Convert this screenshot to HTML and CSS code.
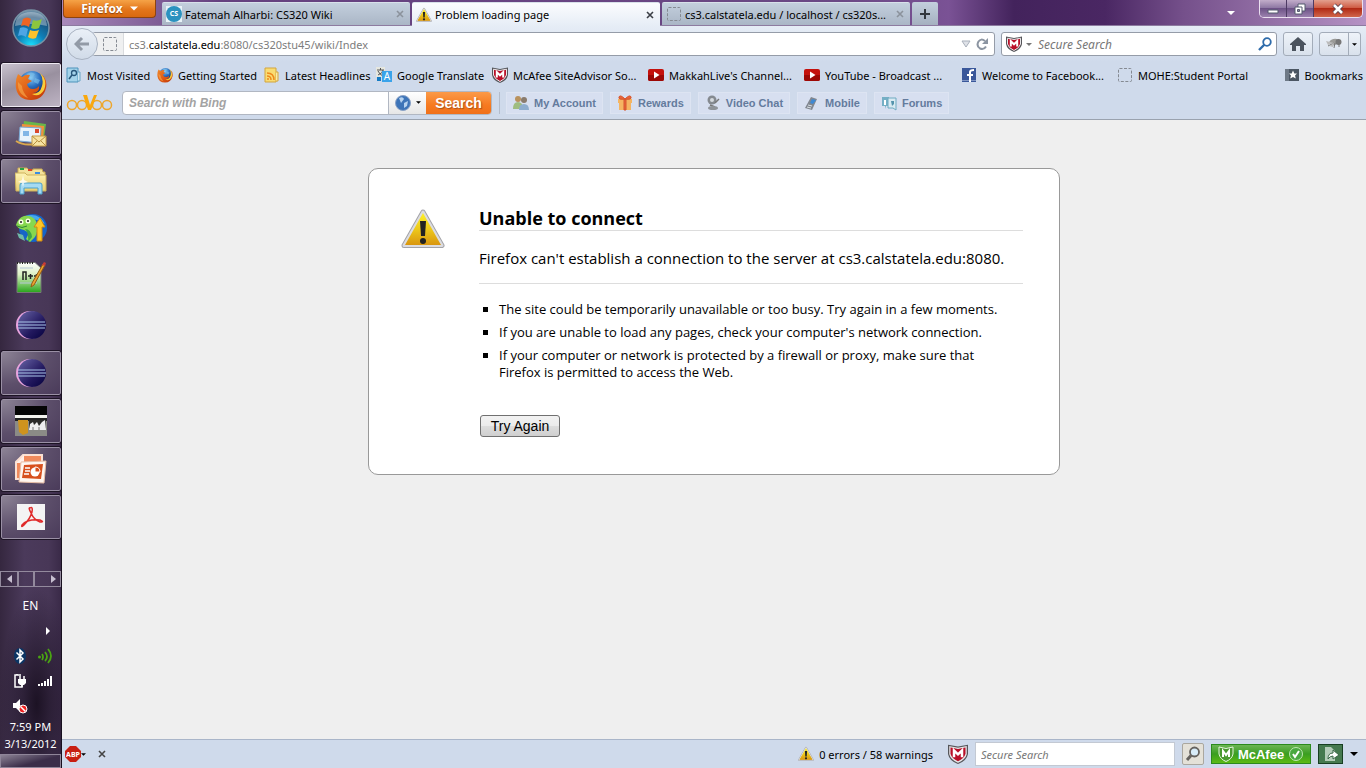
FILE: index.html
```html
<!DOCTYPE html>
<html lang="en">
<head>
    <meta charset="UTF-8">
    <meta name="viewport" content="width=device-width, initial-scale=1.0">
    <title>Problem loading page</title>
    <link rel="stylesheet" href="styles.css">
</head>
<body>
    <!-- shared icons -->
    <svg class="defs" width="0" height="0" aria-hidden="true">
        <defs>
            <linearGradient id="gYellow" x1="0" y1="0" x2="0" y2="1"><stop offset="0" stop-color="#fdf02a"/><stop offset=".5" stop-color="#edc91b"/><stop offset="1" stop-color="#d9960f"/></linearGradient>
            <radialGradient id="gGlobe" cx=".45" cy=".25" r=".7"><stop offset="0" stop-color="#8fd0f5"/><stop offset=".5" stop-color="#2a6fc0"/><stop offset="1" stop-color="#0c2560"/></radialGradient>
            <linearGradient id="gFox" x1="0" y1="0" x2="1" y2="1"><stop offset="0" stop-color="#f08a2c"/><stop offset=".6" stop-color="#dc5412"/><stop offset="1" stop-color="#b8330a"/></linearGradient>
            <radialGradient id="gOrb" cx=".5" cy="1" r="1"><stop offset="0" stop-color="#19e4ff"/><stop offset=".4" stop-color="#0f7fb8"/><stop offset=".8" stop-color="#1c4c74"/><stop offset="1" stop-color="#7c9db4"/></radialGradient>
            <linearGradient id="gEclipse" x1="0" y1="0" x2="1" y2="1"><stop offset="0" stop-color="#6a66a8"/><stop offset=".6" stop-color="#23195f"/><stop offset="1" stop-color="#04003c"/></linearGradient>
            <linearGradient id="gFolder" x1="0" y1="0" x2="0" y2="1"><stop offset="0" stop-color="#fdf3b4"/><stop offset="1" stop-color="#e9cf72"/></linearGradient>
            <linearGradient id="gGreen" x1="0" y1="0" x2="0" y2="1"><stop offset="0" stop-color="#ffffff"/><stop offset=".4" stop-color="#dcf0c4"/><stop offset="1" stop-color="#27a51a"/></linearGradient>
        </defs>
        <symbol id="warning" viewBox="0 0 44 40">
            <path d="M22 3 41 36.500H3Z" fill="url(#gYellow)" stroke="#a3a3a8" stroke-width="5" stroke-linejoin="round"/>
            <path d="M22 3 41 36.500H3Z" fill="url(#gYellow)" stroke="#dcdce0" stroke-width="3" stroke-linejoin="round"/>
            <path d="M22 4 40 36H4Z" fill="url(#gYellow)"/>
            <path d="M19 12h6l-1 15h-4z" fill="#222"/><circle cx="22" cy="32" r="3" fill="#222"/>
        </symbol>
        <symbol id="firefox" viewBox="0 0 32 32">
            <circle cx="17" cy="15" r="13" fill="url(#gGlobe)"/>
            <path d="M12 5q4-3 8 0l-2 3-5 1zM20 9l5 2-2 4-4-2z" fill="#7cc0ea" opacity=".6"/>
            <path d="M3 5 7 8Q11 5 15 6L13 10 17 12 12 15Q13 20 18 20 22 20 24 17 25 23 18 24 27 25 29 15 30 8 25 4 33 10 31 19 28 31 16 31 3 31 1 19 0 11 3 5Z" fill="url(#gFox)"/>
            <path d="M25 4Q29 10 27 17 25 25 17 25 24 29 29 21 33 11 25 4Z" fill="#f8cc3a"/>
            <path d="M3 13Q2 25 13 29 7 22 7 17Z" fill="#f5a347" opacity=".7"/>
        </symbol>
        <symbol id="shield" viewBox="0 0 16 16">
            <path d="M0 .500 8 2 16 .500V8Q15 13.500 8 16 1 13.500 0 8Z" fill="#55565a"/>
            <path d="M1.500 2.200 8 3.500 14.500 2.200V8Q13.500 12 8 14.500 2.500 12 1.500 8Z" fill="#b90f28" stroke="#e8e8ea" stroke-width="1"/>
            <path d="M4.800 10.500V5.200L8 8.300 11.200 5.200V10.500" fill="none" stroke="#fff" stroke-width="2"/>
        </symbol>
        <symbol id="blank" viewBox="0 0 16 16"><rect x="1.500" y="1.500" width="13" height="13" rx="1" fill="none" stroke="#858a92" stroke-dasharray="3 1.500"/></symbol>
        <symbol id="youtube" viewBox="0 0 16 16"><rect y="2" width="16" height="12" rx="2" fill="#c4110c"/><path d="M0 8h16v4q0 2-2 2H2q-2 0-2-2z" fill="#9c0805"/><path d="M6 4.500 11.500 8 6 11.500z" fill="#fff"/></symbol>
        <symbol id="close" viewBox="0 0 8 8"><path d="M1 1 7 7M7 1 1 7" fill="none" stroke="currentColor" stroke-width="1.600"/></symbol>
        <symbol id="down" viewBox="0 0 8 4"><path d="M0 0h8L4 4z" fill="currentColor"/></symbol>
        <symbol id="eclipse" viewBox="0 0 32 32">
            <circle cx="15" cy="16" r="14" fill="#e9a4df"/><circle cx="17" cy="16" r="14" fill="url(#gEclipse)"/>
            <path d="M3 13h27M3 16h28M3 19h27" stroke="#a9c5ea" stroke-width="1.200"/>
        </symbol>
    </svg>

    <aside class="taskbar">
        <button class="start" aria-label="Start">
            <svg viewBox="0 0 40 40" width="40" height="40">
                <circle cx="20" cy="20" r="18" fill="url(#gOrb)" stroke="#7793a6" stroke-width="1.500"/>
                <path d="M4 18Q5 4 20 4T36 18Q20 14 4 18Z" fill="#fff" opacity=".35"/>
                <path d="M12 11q4-3 8 0l-2 8q-4-3-8-1z" fill="#ee6423"/><path d="M22 12q4 2 9-1l-3 9q-4 2-8 0z" fill="#8cc63e"/>
                <path d="M9 20q4-2 8 1l-2 8q-4-3-8-1z" fill="#4ea5e4"/><path d="M19 22q4 2 9 0l-3 8q-4 2-8-1z" fill="#fdc22d"/>
            </svg>
        </button>
        <nav class="tasks">
            <button class="task framed current" aria-label="Firefox"><svg width="32" height="32"><use href="#firefox"/></svg></button>
            <button class="task framed" aria-label="Mail">
                <svg viewBox="0 0 32 32" width="32" height="32"><path d="M9 4 31 7 29 21 7 18z" fill="#69b64b"/><path d="M7 7 29 9 28 23 6 21z" fill="#f0913a"/><path d="M5 10 26 11 25 26 4 24z" fill="#e9f3fb" stroke="#7aa9d4"/><path d="M8 14h6v5H8z" fill="#82b6e6"/><path d="M20 12h4v4h-4z" fill="#d9482c"/><path d="M1 24q8 5 18 3" stroke="#dba94e" stroke-width="2" fill="none"/><path d="M17 19h14v10H17z" fill="#f6e3a2" stroke="#c69b45"/><path d="M17 19l7 6 7-6M17 29l5-5M31 29l-5-5" fill="none" stroke="#b78f3e"/></svg>
            </button>
            <button class="task framed" aria-label="Explorer">
                <svg viewBox="0 0 32 32" width="32" height="32"><path d="M3 5V3h9l2 2h4V4h9l1 3h2v18H3z" fill="#f3e29a" stroke="#c9ab51"/><path d="M0 8h10l2 2h19v16H1z" fill="url(#gFolder)" stroke="#cdb25c"/><path d="M5 3h4v2H5z" fill="#27a343"/><path d="M13 4h4v2h-4z" fill="#d94426"/><path d="M20 7h5v2h-5z" fill="#3a8ee0"/><path d="M5 29V20q0-2 2-2h18q2 0 2 2v9h-4v-6H9v6z" fill="#a5daf2" stroke="#4ba1cc"/><path d="M8 10l1 5 4 2-4 1-1 4-1-4-4-1 4-2z" fill="#fff" opacity=".8"/></svg>
            </button>
            <button class="task" aria-label="Updater">
                <svg viewBox="0 0 32 32" width="32" height="32"><circle cx="18" cy="15" r="14" fill="#1664c8"/><path d="M10 3q14-4 20 8-10-7-20-3z" fill="#46a8ee"/><path d="M1 12q2-7 8-9 8-1 12 5 3 10-1 16l-5 5-4-3 3-6-5-3q-6-1-8-5z" fill="#86d84f"/><path d="M10 16q6 0 7 8l-4 5q1-9-3-13z" fill="#3fa447"/><path d="M2 20l6 2 2 6-6-3z" fill="#6fb9a8"/><circle cx="6" cy="9" r="2.500" fill="#f5ffe2"/><circle cx="6" cy="9" r="1" fill="#222"/><circle cx="13" cy="8" r="2.500" fill="#f5ffe2"/><circle cx="13" cy="8" r="1" fill="#222"/><path d="M2 13q5 3 10 0" fill="none" stroke="#2f8a35"/><path d="M25 5 30 14H27V28H22V14H19z" fill="#fdc724" stroke="#cf8813"/></svg>
            </button>
            <button class="task" aria-label="Notepad++">
                <svg viewBox="0 0 32 32" width="32" height="32"><path d="M2 1.500H20L26 7V31.500H2z" fill="url(#gGreen)" stroke="#777"/><path d="M2 2h17" stroke="#222" stroke-width="2" stroke-dasharray="1 1.500"/><path d="M5 7h13M5 22h17" stroke="#b5c7d7"/><path d="M8 19V11h3v8M13 15h5M15.500 13v5M19 15h5M21.500 13v5" fill="none" stroke="#222" stroke-width="1.500"/><path d="M28 3l2 1-11 20-3 2 1-4z" fill="#eba331" stroke="#925b14"/><path d="M27 4l2-3 2 1-1 3z" fill="#c93c36"/></svg>
            </button>
            <button class="task" aria-label="Eclipse"><svg width="32" height="32"><use href="#eclipse"/></svg></button>
            <button class="task framed" aria-label="Eclipse workspace"><svg width="32" height="32"><use href="#eclipse"/></svg></button>
            <button class="task framed" aria-label="Console">
                <svg viewBox="0 0 32 32" width="32" height="32"><path d="M0 1h32v30H0z" fill="#8b8b86"/><path d="M0 1h32v9H0z" fill="#050505"/><path d="M0 10h32v3H0z" fill="#f3f3ee"/><path d="M0 13h32v3H0z" fill="#222"/><path d="M3 15h10v13l-5 2-4-3z" fill="#cf931e"/><path d="M14 15h17v8H14z" fill="#2a2a28"/><path d="M14 25l1-6 3-2 1 3 3-3 2 4 3-4 3-2 1 10z" fill="#eee"/><path d="M18 25v-3M24 25v-3" stroke="#777"/></svg>
            </button>
            <button class="task framed" aria-label="PowerPoint">
                <svg viewBox="0 0 32 32" width="32" height="32"><path d="M8 2H27V26H1V9z" fill="#f08a5c" stroke="#fbe1d3" stroke-width="2"/><path d="M1 10 9 2v8z" fill="#fff0e8"/><path d="M6 9 31 8 29 30 4 29z" fill="#fff6ef" stroke="#e7bca4"/><path d="M9 12 28 11 26 26 7 25z" fill="#d7501d"/><path d="M10 15h5M10 18h5M9 21h5" stroke="#fff" stroke-width="1.500"/><circle cx="20" cy="19" r="4.500" fill="#fff"/><path d="M20 19v-5q5 0 5 5z" fill="#d7501d" stroke="#fff"/></svg>
            </button>
            <button class="task framed" aria-label="Adobe Reader">
                <svg viewBox="0 0 32 32" width="32" height="32"><path d="M2 3h28v26H2z" fill="#f4f4f4"/><path d="M15 7q3-2 2 4-2 7-8 13-3 3-2 0 5-6 18-5 5 2 0 2-6-2-9-9-3-6-1-5z" fill="none" stroke="#e02b2b" stroke-width="1.500"/></svg>
            </button>
        </nav>
        <div class="task-scroll">
            <button aria-label="Scroll left"><svg viewBox="0 0 5 8" width="5" height="8"><path d="M5 0v8L0 4z" fill="#c7bfd0"/></svg></button>
            <button class="thumb" aria-label="Thumb"></button>
            <button class="last" aria-label="Scroll right"><svg viewBox="0 0 5 8" width="5" height="8"><path d="M0 0v8l5-4z" fill="#c7bfd0"/></svg></button>
        </div>
        <div class="tray">
            <span class="lang">EN</span>
            <div class="tray-icons">
                <span></span>
                <svg viewBox="0 0 16 16" width="16" height="16"><path d="M9 4v8l4-4z" fill="#fff"/></svg>
                <svg viewBox="0 0 16 16" width="16" height="16"><ellipse cx="8" cy="8" rx="6" ry="8" fill="#0c3564"/><path d="M4.500 4.500 11 11 8 14V2l3 3-6.500 6.500" fill="none" stroke="#fff" stroke-width="1.500"/></svg>
                <svg viewBox="0 0 16 16" width="16" height="16"><circle cx="2.500" cy="9" r="1.500" fill="#4aa413"/><path d="M5 6q2 3 0 6M8 4q4 5 0 9M11 1q6 7 0 14" fill="none" stroke="#4aa413" stroke-width="1.800"/></svg>
                <svg viewBox="0 0 16 16" width="16" height="16"><path d="M9 2H3v12h7v-3M5 2V1" fill="none" stroke="#fff" stroke-width="1.500"/><path d="M6 6h8v4l-2 2H8L6 10z" fill="#fff"/><path d="M8 7V3M12 7V3M10 11v3" fill="none" stroke="#fff" stroke-width="1.500"/></svg>
                <svg viewBox="0 0 16 16" width="16" height="16"><path d="M1 11h2v2H1zM4 10h2v3H4zM7 8h2v5H7zM10 6h2v7h-2zM13 3h2v10h-2z" fill="#fff"/></svg>
                <svg viewBox="0 0 16 16" width="16" height="16"><path d="M1 5h3l4-4v13l-4-4H1z" fill="#fff"/><circle cx="11" cy="11" r="4" fill="#e22" stroke="#fff"/><path d="M8.500 8.500l5 5" stroke="#fff" stroke-width="1.500"/></svg>
            </div>
            <div class="clock"><span>7:59 PM</span><span>3/13/2012</span></div>
        </div>
        <button class="show-desktop" aria-label="Show desktop"></button>
    </aside>

    <div class="browser">
        <header class="titlebar">
            <button class="app-menu">Firefox <svg width="8" height="5"><use href="#down"/></svg></button>
            <div class="tabs">
                <div class="tab">
                    <svg viewBox="0 0 16 16" width="16" height="16"><path d="M0 0h16v16H0z" fill="#e9f3f8"/><circle cx="8" cy="8" r="8" fill="#2b92bf"/><text x="8" y="10" font-size="7" font-weight="bold" text-anchor="middle" fill="#fff">CS</text></svg>
                    <a href="#">Fatemah Alharbi: CS320 Wiki</a>
                    <button class="tab-close" aria-label="Close tab"><svg width="8" height="8"><use href="#close"/></svg></button>
                </div>
                <div class="tab active">
                    <svg width="16" height="16"><use href="#warning"/></svg>
                    <a href="#">Problem loading page</a>
                    <button class="tab-close" aria-label="Close tab"><svg width="8" height="8"><use href="#close"/></svg></button>
                </div>
                <div class="tab">
                    <svg width="16" height="16"><use href="#blank"/></svg>
                    <a href="#">cs3.calstatela.edu / localhost / cs320s...</a>
                    <button class="tab-close" aria-label="Close tab"><svg width="8" height="8"><use href="#close"/></svg></button>
                </div>
                <button class="new-tab" aria-label="New tab"><svg viewBox="0 0 10 10" width="10" height="10"><path d="M5 0v10M0 5h10" stroke="#33383f" stroke-width="2"/></svg></button>
            </div>
            <button class="all-tabs" aria-label="List all tabs"><svg width="8" height="4"><use href="#down"/></svg></button>
            <div class="window-buttons">
                <button aria-label="Minimize"><svg viewBox="0 0 12 12" width="12" height="12"><path d="M1 7h10v3H1z" fill="#fff" stroke="#555a6e"/></svg></button>
                <button aria-label="Restore"><svg viewBox="0 0 12 12" width="12" height="12"><path d="M4 1h7v7H4z" fill="#fff" stroke="#555a6e"/><path d="M1 4h7v7H1z" fill="#fff" stroke="#555a6e"/><path d="M3.500 6.500h2v2h-2z" fill="#8b86a8" stroke="#555a6e"/></svg></button>
                <button class="window-close" aria-label="Close"><svg viewBox="0 0 12 12" width="12" height="12"><path d="M2 2l8 8M10 2 2 10" stroke="#5b4550" stroke-width="4.500"/><path d="M2 2l8 8M10 2 2 10" stroke="#fff" stroke-width="2.600"/></svg></button>
            </div>
        </header>

        <div class="nav-bar">
            <button class="back" aria-label="Back"><svg viewBox="0 0 16 16" width="16" height="16"><path d="M15 8H3M8 2 2 8l6 6" fill="none" stroke="#929aa6" stroke-width="3"/></svg></button>
            <div class="url-bar">
                <span class="identity"><svg width="16" height="16"><use href="#blank"/></svg></span>
                <a class="url" href="#">cs3.<b>calstatela.edu</b>:8080/cs320stu45/wiki/Index</a>
                <button aria-label="History"><svg viewBox="0 0 10 8" width="10" height="8"><path d="M1 1h8L5 7z" fill="#dfe2e8" stroke="#a9b0bb"/></svg></button>
                <button aria-label="Reload"><svg viewBox="0 0 12 12" width="12" height="12"><path d="M9 3Q5 0 2.500 3.500 0 8 4 10.500 8 12 10 8.500" fill="none" stroke="#8c95a2" stroke-width="2"/><path d="M12 0v6H6z" fill="#8c95a2"/></svg></button>
            </div>
            <div class="search-bar">
                <svg width="16" height="16"><use href="#shield"/></svg>
                <svg class="gray" width="6" height="3"><use href="#down"/></svg>
                <input type="text" placeholder="Secure Search" aria-label="Secure Search">
                <svg viewBox="0 0 14 14" width="14" height="14"><circle cx="9" cy="5" r="3.800" fill="none" stroke="#2f6cab" stroke-width="1.800"/><path d="M6.500 7.500 1 13" stroke="#2f6cab" stroke-width="2.400"/></svg>
            </div>
            <button class="tool home" aria-label="Home"><svg viewBox="0 0 16 16" width="16" height="16"><path d="M8 1 16 8v1h-2v6h-4v-5H6v5H2V9H0V8z" fill="#4b535e"/></svg></button>
            <div class="tool addon">
                <button aria-label="Add-on"><svg viewBox="0 0 16 14" width="16" height="14"><ellipse cx="8" cy="5" rx="5" ry="3" fill="#9b9b98" transform="rotate(-15 8 5)"/><circle cx="12.500" cy="5" r="3" fill="#777"/><path d="M2 9l6-3M8 11l1-5M13 10V7" stroke="#777"/><path d="M0 4l8 2-6 2zM3 9l5-3-1 4z" fill="#bbb"/></svg></button>
                <button aria-label="Add-on menu"><svg width="5" height="3"><use href="#down"/></svg></button>
            </div>
        </div>

        <div class="bookmarks">
            <nav class="bookmark-list">
                <a href="#"><svg viewBox="0 0 16 16" width="16" height="16"><path d="M1 1h11v14H1z" fill="#a4d3ea" stroke="#4d93bb"/><path d="M12 5h2v9h-2" fill="#cbe5f2" stroke="#6ba6c6"/><circle cx="8" cy="6" r="2.500" fill="none" stroke="#28577b" stroke-width="1.300"/><path d="M6 8l-3 4" stroke="#28577b" stroke-width="1.500"/></svg>Most Visited</a>
                <a href="#"><svg width="16" height="16"><use href="#firefox"/></svg>Getting Started</a>
                <a href="#"><svg viewBox="0 0 16 16" width="16" height="16"><path d="M1 1h11v14H1z" fill="#f9dc73" stroke="#d3a53c"/><path d="M12 5h2v9h-2" fill="#fbe9a8" stroke="#d3a53c"/><path d="M3 9q4 0 4 4M3 6q7 0 7 7" fill="none" stroke="#ee8a1d" stroke-width="1.500"/><circle cx="4" cy="12" r="1" fill="#ee8a1d"/></svg>Latest Headlines</a>
                <a href="#"><svg viewBox="0 0 16 16" width="16" height="16"><path d="M0 0h9v10H0z" fill="#e6e7df"/><path d="M1 3h7M4.500 1v2M2 8q5-2 5-5M2 4q2 4 5 5" stroke="#555" fill="none"/><path d="M6 4h10v11H6z" fill="#3aa3ea"/><path d="M1 10h4v4H1z" fill="#167cc4"/><text x="11" y="13" font-size="10" text-anchor="middle" fill="#fff">A</text></svg>Google Translate</a>
                <a href="#"><svg width="16" height="16"><use href="#shield"/></svg>McAfee SiteAdvisor So...</a>
                <a href="#"><svg width="16" height="16"><use href="#youtube"/></svg>MakkahLive's Channel...</a>
                <a href="#"><svg width="16" height="16"><use href="#youtube"/></svg>YouTube - Broadcast ...</a>
                <a href="#"><svg viewBox="0 0 16 16" width="16" height="16"><path d="M1 1h14v14H1z" fill="#39579a"/><path d="M1 13h14v1H1z" fill="#8296c3"/><path d="M9 15V5q0-2 4-2M6 8h6" fill="none" stroke="#fff" stroke-width="2"/></svg>Welcome to Facebook...</a>
                <a href="#"><svg width="16" height="16"><use href="#blank"/></svg>MOHE:Student Portal</a>
            </nav>
            <button class="bookmark-menu"><svg viewBox="0 0 16 16" width="16" height="16"><path d="M1 2h14v12H1z" fill="#4b5663"/><path d="M1 2h4v12H1z" fill="#6e7986"/><path d="M9 3.500l1.300 3H13l-2 2 .8 3L9 10l-2.800 1.500.8-3-2-2h2.700z" fill="#fff"/></svg>Bookmarks</button>
        </div>

        <div class="oovoo-bar">
            <svg class="oovoo" viewBox="0 0 48 18" width="48" height="18"><g fill="none" stroke="#eda62c" stroke-width="1.500"><circle cx="6" cy="11" r="4.500"/><circle cx="16" cy="11" r="4.500"/><circle cx="31" cy="11" r="4.500"/><circle cx="41" cy="11" r="4.500"/></g><path d="M17 1h4l3 10 4-10h3L25 16h-3z" fill="#f9a80e"/></svg>
            <form class="bing">
                <input type="text" placeholder="Search with Bing" aria-label="Search with Bing">
                <button type="button" class="engine" aria-label="Search engine"><svg viewBox="0 0 16 16" width="16" height="16"><circle cx="8" cy="8" r="7.500" fill="#3d74b8" stroke="#8aa2c6"/><path d="M4 3q4-2 5 1L6 8zM9 8l4-2-1 5-3 2z" fill="#b6d2ef"/></svg><svg width="5" height="3"><use href="#down"/></svg></button>
                <button type="button" class="bing-go">Search</button>
            </form>
            <nav class="oovoo-links">
                <a href="#"><svg viewBox="0 0 16 16" width="16" height="16"><circle cx="5" cy="4" r="3" fill="#b9925d"/><path d="M0 14q0-7 5-7t5 7z" fill="#9fbd80"/><circle cx="11" cy="5" r="3" fill="#8a7b6c"/><path d="M6 15q0-6 5-6t5 6z" fill="#8eadce"/></svg>My Account</a>
                <a href="#"><svg viewBox="0 0 16 16" width="16" height="16"><path d="M1 4h14v4H1zM2 8h12v7H2z" fill="#f5b562"/><path d="M7 4h2v11H7zM8 4Q3-1 2 2T8 4Q13-1 14 2T8 4" fill="#e8643a" stroke="#d6562e"/></svg>Rewards</a>
                <a href="#"><svg viewBox="0 0 16 16" width="16" height="16"><circle cx="7" cy="5" r="4.500" fill="#858a90"/><circle cx="7" cy="5" r="2" fill="#d4d9dd"/><path d="M10 8l4-4M5 10l5 2" stroke="#777" stroke-width="1.500"/><ellipse cx="8" cy="13" rx="5" ry="2" fill="#8e9399"/></svg>Video Chat</a>
                <a href="#"><svg viewBox="0 0 16 16" width="16" height="16"><path d="M7 2 13 4 8 15 1 13z" fill="#818790"/><path d="M8 4 12 5 9 9 6 8z" fill="#3e89d4"/><path d="M13 4l2-3M4 10l4 1M3 12l4 1" stroke="#dbe2e8"/></svg>Mobile</a>
                <a href="#"><svg viewBox="0 0 16 16" width="16" height="16"><path d="M1 2h7v9H5l-1 3v-3H1z" fill="#75afc5"/><path d="M7 3h8v12l-3-2H7z" fill="#d9eaf2" stroke="#6eaac1"/><path d="M4 5v5" stroke="#fff" stroke-width="2"/><path d="M10 6h3v3l-2 2z" fill="#5594ad"/></svg>Forums</a>
            </nav>
        </div>

        <main class="page">
            <section class="error-box">
                <svg class="error-icon" width="44" height="40"><use href="#warning"/></svg>
                <div class="error-body">
                    <h1>Unable to connect</h1>
                    <p>Firefox can't establish a connection to the server at cs3.calstatela.edu:8080.</p>
                    <ul>
                        <li>The site could be temporarily unavailable or too busy. Try again in a few moments.</li>
                        <li>If you are unable to load any pages, check your computer's network connection.</li>
                        <li>If your computer or network is protected by a firewall or proxy, make sure that Firefox is permitted to access the Web.</li>
                    </ul>
                    <button class="try-again">Try Again</button>
                </div>
            </section>
        </main>

        <footer class="status-bar">
            <button class="abp" aria-label="Adblock Plus"><svg viewBox="0 0 16 16" width="16" height="16"><path d="M5 0h6l5 5v6l-5 5H5l-5-5V5z" fill="#c81e12"/><text x="8" y="10.500" font-size="7" font-weight="bold" text-anchor="middle" fill="#fff">ABP</text></svg><svg width="5" height="3"><use href="#down"/></svg></button>
            <button class="bar-close" aria-label="Close bar"><svg width="8" height="8"><use href="#close"/></svg></button>
            <div class="status-right">
                <button class="errors"><svg width="16" height="16"><use href="#warning"/></svg>0 errors / 58 warnings</button>
                <svg width="20" height="20"><use href="#shield"/></svg>
                <input type="text" placeholder="Secure Search" aria-label="Secure Search">
                <button class="lens" aria-label="Search"><svg viewBox="0 0 16 16" width="16" height="16"><circle cx="9.500" cy="6" r="4.500" fill="#d8ecf8" stroke="#65625e" stroke-width="1.800"/><path d="M6 9.500 2 14" stroke="#65625e" stroke-width="3"/></svg></button>
                <button class="mcafee"><svg viewBox="0 0 16 16" width="16" height="16"><path d="M1 1 8 2.500 15 1V8Q14 13 8 15.500 2 13 1 8Z" fill="#4a9a30" stroke="#e7f5df"/><path d="M5 11V5l3 4 3-4v6" fill="none" stroke="#fff" stroke-width="2"/></svg>McAfee<svg viewBox="0 0 16 16" width="16" height="16"><circle cx="8" cy="8" r="6.500" fill="#49a83f" stroke="#bfe8b2"/><path d="M5 8l2 3 4-6" fill="none" stroke="#fff" stroke-width="2"/></svg></button>
                <button class="share" aria-label="Share"><svg viewBox="0 0 16 16" width="16" height="16"><path d="M2 1h6l4 4v10H2z" fill="#b4ccb9"/><path d="M5 13q0-6 5-6V4l6 5-6 4v-3q-3 0-5 3z" fill="#fff" stroke="#396746"/></svg></button>
                <button class="more" aria-label="More"><svg width="8" height="4"><use href="#down"/></svg></button>
            </div>
        </footer>
    </div>
</body>
</html>
```

FILE: styles.css
```css
* {
    box-sizing: border-box;
}

body {
    margin: 0;
    height: 100vh;
    display: flex;
    font-family: "Noto Sans", "Open Sans", sans-serif;
    font-size: 12px;
    color: #000;
    overflow: hidden;
}

button {
    display: flex;
    align-items: center;
    justify-content: center;
    margin: 0;
    padding: 0;
    border: none;
    background: none;
    font: inherit;
    color: inherit;
}

a {
    color: inherit;
    text-decoration: none;
}

input {
    font: inherit;
    min-width: 0;
    border: none;
    outline: none;
    background: none;
}

svg {
    flex: none;
}

.defs {
    position: absolute;
}

/* taskbar */
.taskbar {
    flex: none;
    width: 62px;
    display: flex;
    flex-direction: column;
    background: linear-gradient(90deg, #35273f, #4b3a5b 40%, #483757 80%, #3a2a48);
    border-right: 1px solid #18101f;
    color: #fff;
}

.start {
    height: 63px;
    padding-bottom: 7px;
}

.tasks {
    display: flex;
    flex-direction: column;
    gap: 4px;
}

.task {
    height: 44px;
    margin-left: 1px;
}

.task.framed {
    border: 1px solid #9a90a5;
    border-radius: 2px;
    outline: 1px solid #1d1425;
    background: radial-gradient(ellipse at 0 0, #8d8496, #5d4f6b 55%, #4a3b5a);
}

.task.current {
    border-color: #eee9f2;
    background: linear-gradient(160deg, #c9c2cf, #99909f 45%, #bdb3c3);
}

.task-scroll {
    display: flex;
    height: 16px;
    margin-top: 32px;
}

.task-scroll button {
    width: 18px;
    border: 1px solid #938a9d;
}

.task-scroll .thumb {
    width: 16px;
}

.task-scroll .last {
    flex: 1;
    justify-content: flex-end;
    padding-right: 4px;
}

.tray {
    flex: 1;
    display: flex;
    flex-direction: column;
    align-items: center;
    padding-top: 9px;
    background: radial-gradient(ellipse at 60% 70%, #1c1224, transparent 70%);
}

.lang {
    line-height: 20px;
}

.tray-icons {
    display: grid;
    grid-template-columns: 16px 16px;
    gap: 9px;
    margin-top: 7px;
    padding-left: 3px;
}

.clock {
    display: flex;
    flex-direction: column;
    align-items: center;
    line-height: 17px;
    margin-top: 4px;
    font-size: 11px;
}

.show-desktop {
    height: 14px;
    border: 1px solid #8f8599;
    background: linear-gradient(165deg, #8d8496, #3b2d49 60%);
}

/* window */
.browser {
    flex: 1;
    min-width: 0;
    display: flex;
    flex-direction: column;
    background: #cfdaeb;
}

.titlebar {
    display: flex;
    height: 26px;
    padding: 0 3px 0 1px;
    background: linear-gradient(90deg, #a88abb, #65417f 12%, #6b4985 60%, #7a5295 68%, #43235c 73%, #4a2763 80%, #75508b 86%, #b592c4);
    border-bottom: 1px solid #8d7ba0;
}

.app-menu {
    width: 93px;
    height: 18px;
    gap: 7px;
    border: 1px solid #8c4411;
    border-top: none;
    border-radius: 0 0 4px 4px;
    background: linear-gradient(#f5a347, #e3761b 55%, #d9690f);
    color: #fff;
    font-weight: bold;
    text-shadow: 0 1px 1px #8c4411;
}

.tabs {
    display: flex;
    gap: 2px;
    margin: 2px 0 0 6px;
}

.tab {
    width: 248px;
    height: 23px;
    display: flex;
    align-items: center;
    gap: 3px;
    padding: 0 6px 0 4px;
    background: linear-gradient(#c3cfdd, #aab6c6);
    border-top: 1px solid #d8e1ea;
    border-radius: 2px 2px 0 0;
}

.tab a {
    flex: 1;
    white-space: nowrap;
    overflow: hidden;
    font-size: 11px;
}

.tab.active {
    height: 24px;
    background: linear-gradient(#fbfcfe, #e6edf6);
}

.tab-close {
    color: #8b929c;
}

.tab.active .tab-close {
    color: #3b3f46;
}

.new-tab {
    width: 26px;
    height: 23px;
    background: linear-gradient(#c3cfdd, #a5b0c0);
    border-radius: 2px 2px 0 0;
}

.all-tabs {
    margin-left: auto;
    margin-right: 24px;
    color: #fff;
}

.window-buttons {
    display: flex;
    height: 18px;
    border: 1px solid #eadff0;
    border-top: none;
    border-radius: 0 0 5px 5px;
    overflow: hidden;
}

.window-buttons button {
    width: 27px;
    border-right: 1px solid #4d3a63;
    background: linear-gradient(#c2adca, #8f79a4 45%, #6d5286 50%, #9b81ae);
}

.window-buttons .window-close {
    width: 48px;
    border-right: none;
    background: linear-gradient(#e3a08e, #cf5d45 45%, #b12a15 50%, #d0664b);
}

/* navigation */
.nav-bar {
    display: flex;
    align-items: center;
    height: 36px;
    padding: 0 5px 0 4px;
    background: linear-gradient(#e6edf6, #cfdaeb);
}

.back {
    width: 32px;
    height: 32px;
    flex: none;
    border: 1px solid #a9b3c2;
    border-radius: 50%;
    background: linear-gradient(#eaf0f7, #d1dbe8);
    z-index: 1;
}

.url-bar,
.search-bar {
    display: flex;
    align-items: center;
    height: 24px;
    border: 1px solid #959ca8;
    border-radius: 3px;
    background: #fff;
}

.url-bar {
    flex: 1;
    gap: 5px;
    margin-left: -6px;
    padding-right: 6px;
    font-size: 11px;
    color: #7d7d7d;
}

.identity {
    display: flex;
    align-items: center;
    align-self: stretch;
    padding: 0 5px 0 9px;
    background: #eff0f1;
    border-right: 1px solid #d9dbde;
}

.url {
    flex: 1;
}

.url b {
    font-weight: normal;
    color: #000;
}

.search-bar {
    width: 276px;
    gap: 4px;
    margin-left: 6px;
    padding: 0 4px;
}

.search-bar input {
    flex: 1;
}

.search-bar .gray {
    color: #777;
}

input::placeholder {
    color: #777;
    font-style: italic;
    opacity: 1;
}

.tool {
    display: flex;
    align-items: stretch;
    height: 24px;
    margin-left: 6px;
    border: 1px solid #a3acb9;
    border-radius: 3px;
    background: linear-gradient(#eef3f9, #d9e1ec);
}

.home {
    width: 30px;
    align-items: center;
}

.addon button {
    width: 28px;
}

.addon button + button {
    width: 12px;
    border-left: 1px solid #a3acb9;
}

/* bookmarks */
.bookmarks {
    display: flex;
    height: 26px;
    padding: 0 3px 0 4px;
    font-size: 11px;
    white-space: nowrap;
}

.bookmark-list {
    flex: 1;
    display: grid;
    grid-template-columns: 91px 107px 112px 116px 156px 156px 157px 156px 1fr;
}

.bookmark-list a {
    display: flex;
    align-items: center;
    gap: 5px;
}

.bookmark-menu {
    gap: 5px;
}

/* oovoo toolbar */
.oovoo-bar {
    display: flex;
    align-items: center;
    height: 32px;
    padding: 0 4px 2px;
    border-bottom: 1px solid #9aa2ae;
    font-family: "Liberation Sans", Arial, sans-serif;
    font-weight: bold;
}

.bing {
    display: flex;
    height: 24px;
    width: 370px;
    margin-left: 8px;
    border: 1px solid #b1b7c2;
    border-radius: 4px;
    background: #fff;
}

.bing input {
    flex: 1;
    padding: 0 6px;
}

.bing input::placeholder {
    color: #a3a3a3;
}

.engine {
    width: 38px;
    gap: 5px;
    border-left: 1px solid #b1b7c2;
    background: linear-gradient(#fff, #e6e6e6);
}

.bing-go {
    width: 65px;
    border-radius: 0 3px 3px 0;
    background: linear-gradient(#fb9a48, #f67a20 60%, #f0701a);
    color: #fff;
    font-size: 14px;
    text-shadow: 1px 1px 1px #a8511a;
}

.oovoo-links {
    display: flex;
    gap: 7px;
    margin-left: 7px;
    padding-left: 6px;
    border-left: 1px solid #b3bccb;
    color: #647b9d;
    font-size: 11px;
}

.oovoo-links a {
    display: flex;
    align-items: center;
    gap: 5px;
    height: 22px;
    padding: 0 6px;
    border: 1px solid #dde4f2;
    background: #d7dff0;
}

/* error page */
.page {
    flex: 1;
    min-height: 0;
    padding: 48px 24px;
    background: #efefef;
}

.error-box {
    display: flex;
    gap: 34px;
    max-width: 692px;
    margin: 0 auto;
    padding: 37px 36px 37px 32px;
    border: 1px solid #999;
    border-radius: 10px;
    background: #fff;
    font-family: "Open Sans", "Noto Sans", sans-serif;
}

.error-icon {
    margin-top: 3px;
}

.error-body {
    flex: 1;
}

.error-body h1 {
    margin: 0 0 16px;
    border-bottom: 1px solid #ddd;
    font-size: 18px;
    line-height: 24px;
}

.error-body p {
    margin: 0;
    padding-bottom: 13px;
    border-bottom: 1px solid #ddd;
    font-size: 15px;
    line-height: 23px;
}

.error-body ul {
    margin: 17px 0 34px;
    padding: 0 16px 0 20px;
    list-style: square;
    font-size: 13px;
    line-height: 17px;
}

.error-body li {
    margin-bottom: 6px;
}

.try-again {
    width: 80px;
    height: 22px;
    margin-left: 1px;
    border: 1px solid #707070;
    border-radius: 3px;
    background: linear-gradient(#f2f2f2, #ebebeb 50%, #ddd 50%, #cfcfcf);
    font-family: "Liberation Sans", Arial, sans-serif;
    font-size: 14px;
}

/* add-on bar */
.status-bar {
    display: flex;
    align-items: center;
    height: 29px;
    padding: 0 8px 0 3px;
    border-top: 1px solid #a9b5c9;
    font-size: 11px;
}

.bar-close {
    margin-left: 12px;
    color: #444;
}

.status-right {
    display: flex;
    align-items: center;
    gap: 7px;
    margin-left: auto;
}

.status-right input {
    width: 200px;
    height: 24px;
    padding: 0 5px;
    border: 1px solid #c3c9d3;
    background: #fff;
}

.errors {
    gap: 5px;
    margin-right: 8px;
}

.lens {
    width: 22px;
    height: 22px;
    border: 1px solid #aaa79f;
    border-radius: 2px;
    background: #e4e1d8;
}

.mcafee {
    width: 100px;
    height: 20px;
    gap: 4px;
    border: 1px solid #2b8a1d;
    background: linear-gradient(#6cb555, #3a9e20 50%, #5cba14);
    color: #fff;
    font-family: "Liberation Sans", Arial, sans-serif;
    font-size: 13px;
    font-weight: bold;
}

.share {
    width: 25px;
    height: 20px;
    border: 1px solid #173f22;
    background: #45794f;
}
```
